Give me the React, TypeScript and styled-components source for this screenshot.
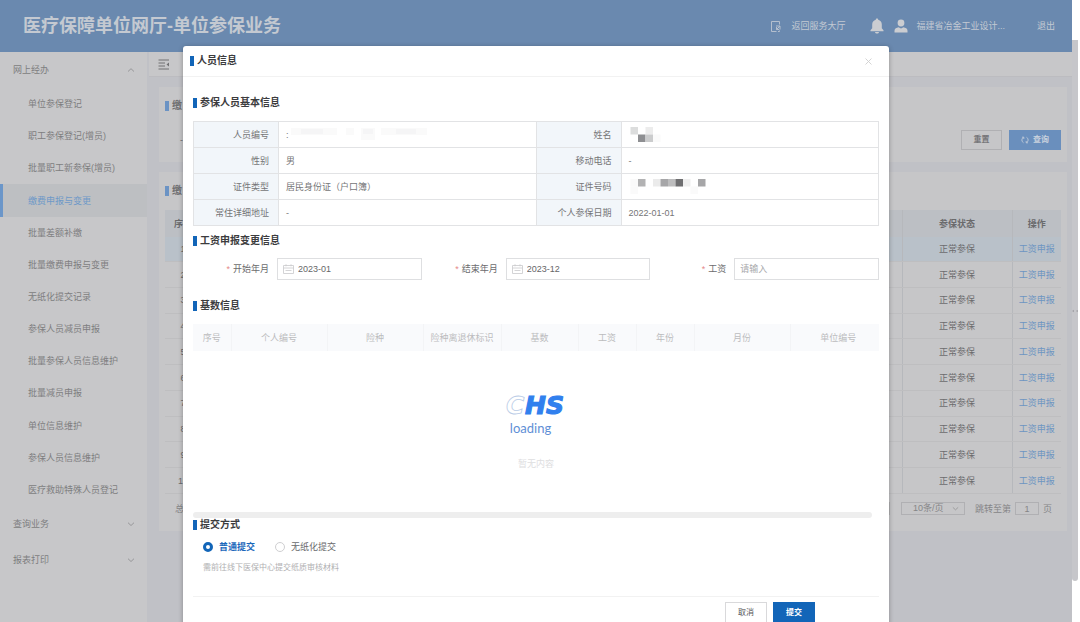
import React, { useState } from "react";
import styled, { createGlobalStyle, css } from "styled-components";

const GlobalStyle = createGlobalStyle`
  *, *::before, *::after { box-sizing: border-box; }
  html, body, #root { height: 100%; }
  body {
    margin: 0;
    overflow: hidden;
    background: #fff;
    color: #6c6c6e;
    font: 9px/12px "Liberation Sans", "Noto Sans CJK SC", sans-serif;
  }
  button, input, select { font: inherit; color: inherit; }
  a { text-decoration: none; }
  ul { margin: 0; padding: 0; list-style: none; }
  h1, h2, p { margin: 0; }
`;

/* ---------- shell ---------- */

const Shell = styled.div`
  display: flex;
  height: 100%;
  overflow: hidden;
`;

const Screen = styled.div`
  position: relative;
  flex: 1;
  min-width: 0;
  display: flex;
  flex-direction: column;
  overflow: hidden;
  background: #c0c1c6;
`;

const ScrollTrack = styled.div`
  flex: none;
  width: 8px;
  padding: 40px 2px 41px 0;
  display: flex;
`;

const ScrollThumb = styled.div`
  flex: 1;
  border-radius: 0 0 3px 3px;
  background: #c6c6ca;
  display: flex;
  align-items: center;
  justify-content: center;
`;

const TopBar = styled.header`
  flex: none;
  height: 52px;
  padding: 0 17px 0 23px;
  display: flex;
  align-items: center;
  background: #6a89af;
  color: #c3c9d3;
`;

const SiteName = styled.h1`
  flex: 1;
  font-size: 18px;
  line-height: 24px;
  font-weight: 700;
  color: #c4c9d1;
`;

const TopLink = styled.a`
  display: flex;
  align-items: center;
  gap: 10px;
  color: inherit;
`;

const TopIcons = styled.div`
  display: flex;
  align-items: center;
  gap: 10px;
  margin: 0 8px 0 25px;
`;

const UserName = styled.span`
  margin-right: 32px;
`;

const Columns = styled.div`
  flex: 1;
  min-height: 0;
  display: flex;
`;

/* ---------- side menu ---------- */

const SideMenu = styled.nav`
  flex: none;
  width: 147px;
  background: #c7c7c9;
  color: #7e7e80;
`;

const GroupButton = styled.button`
  display: flex;
  align-items: center;
  justify-content: space-between;
  width: 100%;
  height: 36px;
  padding: 0 12px 0 13px;
  border: 0;
  background: none;
  text-align: left;
`;

const SubMenu = styled.ul`
  display: grid;
  grid-auto-rows: 1fr;
  height: 418px;
`;

const SubLink = styled.a<{ $active?: boolean }>`
  display: flex;
  align-items: center;
  height: 100%;
  padding-left: 25px;
  border-left: 3px solid transparent;
  color: #7e7e80;
  ${(p) =>
    p.$active &&
    css`
      border-left-color: #6b96c9;
      background: #bdbfc2;
      color: #6d99c8;
    `}
`;

/* ---------- main area ---------- */

const Main = styled.main`
  flex: 1;
  min-width: 0;
  margin-left: 2px;
`;

const TabStrip = styled.div`
  height: 25px;
  padding-left: 9px;
  display: flex;
  align-items: center;
  background: #c7c7c9;
  border-bottom: 1px solid #bcbcc0;
`;

const Card = styled.section<{ $tall?: boolean }>`
  margin: 10px 5px 0 10px;
  padding: 12px 6px;
  min-height: ${(p) => (p.$tall ? 359 : 75)}px;
  background: #c6c6c8;
`;

const Heading = styled.h2<{ $muted?: boolean }>`
  display: flex;
  align-items: center;
  gap: 3px;
  font-size: 10px;
  line-height: 14px;
  font-weight: 700;
  color: ${(p) => (p.$muted ? "#6f6f71" : "#3c3c3e")};

  &::before {
    content: "";
    width: 4px;
    height: 10px;
    background: ${(p) => (p.$muted ? "#6b93c4" : "#1265b8")};
  }
`;

const QueryRow = styled.div`
  display: flex;
  align-items: center;
  gap: 7px;
  margin-top: 17px;
`;

const QueryLabel = styled.span`
  flex: 1;
  padding-left: 15px;
`;

const MutedButton = styled.button<{ $primary?: boolean }>`
  display: flex;
  align-items: center;
  justify-content: center;
  gap: 4px;
  width: ${(p) => (p.$primary ? 52 : 41)}px;
  height: 20px;
  padding: 0;
  border: 1px solid ${(p) => (p.$primary ? "#6a8fbd" : "#b0b0b3")};
  background: ${(p) => (p.$primary ? "#6a8fbd" : "transparent")};
  color: ${(p) => (p.$primary ? "#c9d2de" : "#77777a")};
  font-size: 8px;
  font-weight: 700;
`;

const RecordTable = styled.table`
  width: 100%;
  height: 284px;
  margin-top: 12px;
  border-collapse: collapse;
  table-layout: fixed;
  text-align: center;

  th {
    height: 27px;
    padding: 0;
    background: #bcbfc4;
    color: #6a6a6c;
    font-weight: 700;
  }
  td {
    padding: 0;
    border-bottom: 1px solid #bebec0;
  }
  tbody tr:first-child td {
    background: #b9c1c9;
  }
  th:nth-child(n + 3),
  td:nth-child(n + 3) {
    border-left: 1px solid #b6b8bc;
  }
  a {
    color: #6d95c2;
  }
`;

const Pager = styled.div`
  display: flex;
  align-items: center;
  margin-top: 8px;
  padding: 0 9px 0 10px;
  color: #858587;
`;

const PagerTotal = styled.span`
  flex: 1;
`;

const PagerNext = styled.button`
  width: 14px;
  height: 13px;
  margin-right: 11px;
  padding: 0;
  border: 1px solid #b0b0b3;
  background: none;
`;

const SelectBox = styled.span`
  display: flex;
  align-items: center;
  width: 64px;
  height: 13px;
  margin-right: 10px;
  padding-right: 5px;
  border: 1px solid #b0b0b3;
`;

const PageSize = styled.select`
  flex: 1;
  min-width: 0;
  height: 11px;
  padding: 0 0 0 11px;
  border: 0;
  background: none;
  appearance: none;
  line-height: 11px;
`;

const PageJump = styled.label`
  display: flex;
  align-items: center;
  gap: 4px;
`;

const JumpInput = styled.input`
  width: 24px;
  height: 13px;
  padding: 0;
  border: 1px solid #b0b0b3;
  background: none;
  text-align: center;
`;

/* ---------- dialog ---------- */

const Overlay = styled.div`
  position: absolute;
  inset: 0;
  display: flex;
  justify-content: center;
  align-items: flex-start;
  padding-top: 46px;
  overflow: hidden;
`;

const Dialog = styled.div`
  width: 65%;
  min-width: 706px;
  border-radius: 3px;
  background: #fff;
  box-shadow: 0 1px 5px rgba(0, 0, 0, 0.3);
`;

const DialogHead = styled.div`
  display: flex;
  align-items: center;
  justify-content: space-between;
  height: 31px;
  padding: 0 17px 0 7px;
  border-bottom: 1px solid #f2f2f2;
`;

const CloseButton = styled.button`
  display: flex;
  padding: 0;
  border: 0;
  background: none;
  color: #cfcfcf;
`;

const DialogBody = styled.div`
  padding: 19px 10px 0;
`;

const InfoTable = styled.table`
  width: 100%;
  margin: 11px 0 8px;
  border-collapse: collapse;
  table-layout: fixed;

  tr {
    height: 26px;
  }
  th,
  td {
    height: 26px;
    padding: 0 7px;
    border: 1px solid #e2e3e5;
    color: #757577;
    font-weight: 400;
    text-align: left;
  }
  th {
    padding-right: 9px;
    background: #f2f6fa;
    text-align: right;
  }
  svg {
    display: block;
  }
`;

const FormGrid = styled.div`
  display: grid;
  grid-template-columns: repeat(3, 1fr);
  margin: 10px 0 19px;
`;

const Field = styled.div`
  display: flex;
  align-items: center;
  gap: 8px;
`;

const FieldLabel = styled.label`
  width: 76px;
  text-align: right;
  color: #6c6c6e;

  &::before {
    content: "*";
    margin-right: 3px;
    color: #e58a8a;
  }
`;

const InputBox = styled.span`
  flex: 1;
  min-width: 0;
  display: flex;
  align-items: center;
  gap: 4px;
  height: 22px;
  padding: 0 5px;
  border: 1px solid #dedfe1;
`;

const TextInput = styled.input`
  flex: 1;
  min-width: 0;
  padding: 0;
  border: 0;
  outline: 0;
  background: none;
  color: #666668;

  &::placeholder {
    color: #a9a9ab;
    opacity: 1;
  }
`;

const BaseScroller = styled.div`
  margin-top: 11px;
  overflow: hidden;
`;

const BaseTable = styled.table`
  width: 693px;
  border-collapse: collapse;
  table-layout: fixed;

  th {
    height: 27px;
    padding: 0;
    background: #f9fafc;
    color: #bcbcbe;
    font-weight: 400;
    text-align: center;
  }
  th + th {
    border-left: 1px solid #f3f4f6;
  }
`;

const EmptyState = styled.div`
  display: flex;
  flex-direction: column;
  align-items: center;
  height: 161px;
  padding-top: 38px;
  color: #dededf;
`;

const LoadingText = styled.span`
  margin: 0 11px 23px 0;
  font: 13px/14px "Lato", "Liberation Sans", sans-serif;
  color: #5f8fd6;
`;

const HorizontalBar = styled.div`
  height: 6px;
  margin: 0 7px 0 0;
  border-radius: 3px;
  background: #eeeeee;
`;

const RadioRow = styled.div`
  display: flex;
  gap: 20px;
  margin: 9px 0 9px 10px;
`;

const RadioLabel = styled.label<{ $on: boolean }>`
  display: flex;
  align-items: center;
  gap: 6px;
  color: ${(p) => (p.$on ? "#1b68bb" : "#6a6a6c")};
  font-weight: ${(p) => (p.$on ? 700 : 400)};
`;

const Radio = styled.input`
  appearance: none;
  width: 10px;
  height: 10px;
  margin: 0;
  border: 1px solid #cfcfd1;
  border-radius: 50%;
  background: #fff;

  &:checked {
    border: 3px solid #1265b8;
  }
`;

const Hint = styled.p`
  margin-left: 10px;
  font-size: 8px;
  color: #b0b0b2;
`;

const DialogFoot = styled.div`
  display: flex;
  justify-content: flex-end;
  gap: 6px;
  margin-top: 22px;
  padding: 5px 64px 12px 0;
  border-top: 1px solid #f2f2f2;
`;

const DialogButton = styled.button<{ $primary?: boolean }>`
  width: 42px;
  height: 22px;
  padding: 0;
  border: 1px solid ${(p) => (p.$primary ? "#1265b8" : "#d9d9db")};
  background: ${(p) => (p.$primary ? "#1265b8" : "#fff")};
  color: ${(p) => (p.$primary ? "#fff" : "#555557")};
  font-size: 8px;
  font-weight: ${(p) => (p.$primary ? 700 : 400)};
`;

/* ---------- icons ---------- */

const Chevron = ({ up, size = 8 }: { up?: boolean; size?: number }) => (
  <svg width={size} height={size} viewBox="0 0 8 8" fill="none" stroke="#929294" strokeWidth="0.9">
    <path d={up ? "M1 5.5 4 2.7 7 5.5" : "M1 2.7 4 5.5 7 2.7"} />
  </svg>
);

const BackIcon = () => (
  <svg width="11" height="13" viewBox="0 0 11 13" fill="none" stroke="#b4bfce" strokeWidth="1">
    <path d="M9.5 4.500V1.500H1.500v10H6.500M9.500 10.500v1H8" />
    <path d="M6 6h4v3.500M10 6 6.500 9.500M6.500 7v2.500H9" />
  </svg>
);

const BellIcon = () => (
  <svg width="14" height="16" viewBox="0 0 14 16" fill="#cbcdd1">
    <path d="M7 0.500c.8 0 1.200.5 1.200 1.200C10.500 2.300 11.800 4 11.800 6.500v3.800l1.700 2v1H.5v-1l1.700-2V6.500C2.200 4 3.500 2.300 5.800 1.700 5.800 1 6.200.5 7 .5Z" />
    <path d="M5 14h4c-.2 1-1 1.600-2 1.600S5.200 15 5 14Z" />
  </svg>
);

const UserIcon = () => (
  <svg width="14" height="14" viewBox="0 0 14 14" fill="#cbcdd1">
    <circle cx="7" cy="4" r="3.400" />
    <path d="M.5 13.500v-1.800C.5 9.500 2.500 8.600 4.500 8.200L7 9.400l2.500-1.200c2 .4 4 1.300 4 3.500v1.800Z" />
  </svg>
);

const FoldIcon = () => (
  <svg width="12" height="11" viewBox="0 0 12 11" fill="none" stroke="#707072" strokeWidth="1">
    <path d="M.5 1h10.500M.5 4h6.500M.5 7h6.500M.5 10h10.500" />
    <path d="M11 3.500v4L8.500 5.500Z" fill="#707072" stroke="none" />
  </svg>
);

const RefreshIcon = () => (
  <svg width="8" height="8" viewBox="0 0 8 8" fill="none" stroke="#c0cbd9" strokeWidth="0.9">
    <path d="M2.500 6.700A3 3 0 0 1 2.600 1.300M5.500 1.300A3 3 0 0 1 5.400 6.700M1 1.200h1.800V3M7 6.800H5.200V5" />
  </svg>
);

const CalendarIcon = () => (
  <svg width="11" height="10" viewBox="0 0 11 10" fill="none" stroke="#c9c9cb" strokeWidth="0.8">
    <path d="M.5 1.500h10v8H.5zM.5 4h10M3 .3v2M8 .3v2M2.500 6.500h6" />
  </svg>
);

const CloseIcon = () => (
  <svg width="7" height="7" viewBox="0 0 7 7" stroke="currentColor" strokeWidth="0.9">
    <path d="M.5.5l6 6M6.500.5l-6 6" />
  </svg>
);

const SplitterDots = () => (
  <svg width="6" height="4" viewBox="0 0 6 4" fill="#a2a2a6">
    <path d="M0 2 2 .8v2.400zM4.500 1.300H6v1.400H4.500z" />
  </svg>
);

const ChsLogo = () => (
  <svg width="64" height="32" viewBox="0 0 64 32" overflow="visible" role="img" aria-label="CHS">
    <g fontFamily="DejaVu Sans" fontSize="25" fontWeight="700" fontStyle="italic">
      <text x="2" y="25" fill="#fff" stroke="#b9cbe6" strokeWidth="0.8">C</text>
      <text x="21" y="25" fill="#3180ee" stroke="#3180ee" strokeWidth="1.2">HS</text>
    </g>
  </svg>
);

type Block = [col: number, row: number, fill: string];

const Mosaic = ({ blocks }: { blocks: Block[] }) => (
  <svg width="150" height="15" viewBox="0 0 150 15">
    {blocks.map(([col, row, fill]) => (
      <rect key={`${col}-${row}`} x={1.5 + col * 7.5} y={row * 7.5} width="7.5" height="7.5" fill={fill} />
    ))}
  </svg>
);

/* ---------- data ---------- */

const menuItems = [
  "单位参保登记",
  "职工参保登记(增员)",
  "批量职工新参保(增员)",
  "缴费申报与变更",
  "批量差额补缴",
  "批量缴费申报与变更",
  "无纸化提交记录",
  "参保人员减员申报",
  "批量参保人员信息维护",
  "批量减员申报",
  "单位信息维护",
  "参保人员信息维护",
  "医疗救助特殊人员登记",
];

const baseColumns: [string, number][] = [
  ["序号", 38],
  ["个人编号", 96],
  ["险种", 96],
  ["险种离退休标识", 78],
  ["基数", 77],
  ["工资", 58],
  ["年份", 58],
  ["月份", 96],
  ["单位编号", 96],
];

const nameBlocks: Block[] = [
  [0, 0, "#dcdddd"],
  [1, 1, "#8e8f92"],
  [2, 0, "#ececec"],
  [2, 1, "#cbcccd"],
  [3, 1, "#fafafa"],
];

const idBlocks: Block[] = [
  [0, 0, "#fafafa"],
  [0, 1, "#fafafa"],
  [1, 0, "#b2b2b3"],
  [3, 0, "#ebebeb"],
  [4, 0, "#a6a6a8"],
  [5, 0, "#bdbdbe"],
  [6, 0, "#6f6f71"],
  [7, 0, "#efefef"],
  [8, 1, "#fafafa"],
  [9, 0, "#a6a6a8"],
];

const CodeSmudge = () => (
  <svg width="146" height="15" viewBox="0 0 146 15" fill="#f5f5f6">
    <text x="0" y="11" fontSize="9" fill="#757577">:</text>
    <path d="M5 1h46v7H5zM60 1h8v7h-8zM75 1h14v12h-14zM95 1h46v7H95z" fill="#fafafa" />
    <path d="M15 2h22v5H15zM77 2h10v5H77zM110 2h20v5h-20z" />
  </svg>
);

/* ---------- page ---------- */

export default function App() {
  const [mode, setMode] = useState("normal");
  const [start, setStart] = useState("2023-01");
  const [end, setEnd] = useState("2023-12");
  const [wage, setWage] = useState("");

  return (
    <>
      <GlobalStyle />
      <Shell>
        <Screen>
          <TopBar>
            <SiteName>医疗保障单位网厅-单位参保业务</SiteName>
            <TopLink href="#hall">
              <BackIcon />
              返回服务大厅
            </TopLink>
            <TopIcons>
              <BellIcon />
              <UserIcon />
            </TopIcons>
            <UserName>福建省冶金工业设计...</UserName>
            <TopLink href="#logout">退出</TopLink>
          </TopBar>

          <Columns>
            <SideMenu>
              <GroupButton type="button">
                网上经办
                <Chevron up />
              </GroupButton>
              <SubMenu>
                {menuItems.map((item) => (
                  <li key={item}>
                    <SubLink href="#menu" $active={item === "缴费申报与变更"}>
                      {item}
                    </SubLink>
                  </li>
                ))}
              </SubMenu>
              <GroupButton type="button">
                查询业务
                <Chevron />
              </GroupButton>
              <GroupButton type="button">
                报表打印
                <Chevron />
              </GroupButton>
            </SideMenu>

            <Main>
              <TabStrip>
                <FoldIcon />
              </TabStrip>

              <Card>
                <Heading $muted>缴</Heading>
                <QueryRow>
                  <QueryLabel>-</QueryLabel>
                  <MutedButton type="button">重置</MutedButton>
                  <MutedButton type="button" $primary>
                    <RefreshIcon />
                    查询
                  </MutedButton>
                </QueryRow>
              </Card>

              <Card $tall>
                <Heading $muted>缴</Heading>
                <RecordTable>
                  <colgroup>
                    <col style={{ width: 36 }} />
                    <col />
                    <col style={{ width: 110 }} />
                    <col style={{ width: 49 }} />
                  </colgroup>
                  <thead>
                    <tr>
                      <th>序号</th>
                      <th />
                      <th>参保状态</th>
                      <th>操作</th>
                    </tr>
                  </thead>
                  <tbody>
                    {Array.from({ length: 10 }, (_, i) => (
                      <tr key={i}>
                        <td>{i + 1}</td>
                        <td />
                        <td>正常参保</td>
                        <td>
                          <a href="#declare">工资申报</a>
                        </td>
                      </tr>
                    ))}
                  </tbody>
                </RecordTable>
                <Pager>
                  <PagerTotal>总</PagerTotal>
                  <PagerNext type="button" aria-label="下一页" />
                  <SelectBox>
                    <PageSize aria-label="每页条数">
                      <option>10条/页</option>
                    </PageSize>
                    <Chevron size={7} />
                  </SelectBox>
                  <PageJump>
                    跳转至第
                    <JumpInput defaultValue="1" />
                    页
                  </PageJump>
                </Pager>
              </Card>
            </Main>
          </Columns>

          <Overlay>
            <Dialog role="dialog" aria-labelledby="dialog-title">
              <DialogHead>
                <Heading id="dialog-title">人员信息</Heading>
                <CloseButton type="button" aria-label="关闭">
                  <CloseIcon />
                </CloseButton>
              </DialogHead>

              <DialogBody>
                <Heading>参保人员基本信息</Heading>
                <InfoTable>
                  <colgroup>
                    <col style={{ width: 85 }} />
                    <col />
                    <col style={{ width: 85 }} />
                    <col />
                  </colgroup>
                  <tbody>
                    <tr>
                      <th>人员编号</th>
                      <td>
                        <CodeSmudge />
                      </td>
                      <th>姓名</th>
                      <td>
                        <Mosaic blocks={nameBlocks} />
                      </td>
                    </tr>
                    <tr>
                      <th>性别</th>
                      <td>男</td>
                      <th>移动电话</th>
                      <td>-</td>
                    </tr>
                    <tr>
                      <th>证件类型</th>
                      <td>居民身份证（户口簿）</td>
                      <th>证件号码</th>
                      <td>
                        <Mosaic blocks={idBlocks} />
                      </td>
                    </tr>
                    <tr>
                      <th>常住详细地址</th>
                      <td>-</td>
                      <th>个人参保日期</th>
                      <td>2022-01-01</td>
                    </tr>
                  </tbody>
                </InfoTable>

                <Heading>工资申报变更信息</Heading>
                <FormGrid>
                  <Field>
                    <FieldLabel htmlFor="start">开始年月</FieldLabel>
                    <InputBox>
                      <CalendarIcon />
                      <TextInput id="start" value={start} onChange={(e) => setStart(e.target.value)} />
                    </InputBox>
                  </Field>
                  <Field>
                    <FieldLabel htmlFor="end">结束年月</FieldLabel>
                    <InputBox>
                      <CalendarIcon />
                      <TextInput id="end" value={end} onChange={(e) => setEnd(e.target.value)} />
                    </InputBox>
                  </Field>
                  <Field>
                    <FieldLabel htmlFor="wage">工资</FieldLabel>
                    <InputBox>
                      <TextInput
                        id="wage"
                        placeholder="请输入"
                        value={wage}
                        onChange={(e) => setWage(e.target.value)}
                      />
                    </InputBox>
                  </Field>
                </FormGrid>

                <Heading>基数信息</Heading>
                <BaseScroller>
                  <BaseTable>
                    <colgroup>
                      {baseColumns.map(([name, width]) => (
                        <col key={name} style={{ width }} />
                      ))}
                    </colgroup>
                    <thead>
                      <tr>
                        {baseColumns.map(([name]) => (
                          <th key={name}>{name}</th>
                        ))}
                      </tr>
                    </thead>
                  </BaseTable>
                </BaseScroller>
                <EmptyState>
                  <ChsLogo />
                  <LoadingText>loading</LoadingText>
                  暂无内容
                </EmptyState>
                <HorizontalBar />

                <Heading>提交方式</Heading>
                <RadioRow>
                  <RadioLabel $on={mode === "normal"}>
                    <Radio
                      type="radio"
                      name="mode"
                      checked={mode === "normal"}
                      onChange={() => setMode("normal")}
                    />
                    普通提交
                  </RadioLabel>
                  <RadioLabel $on={mode === "paperless"}>
                    <Radio
                      type="radio"
                      name="mode"
                      checked={mode === "paperless"}
                      onChange={() => setMode("paperless")}
                    />
                    无纸化提交
                  </RadioLabel>
                </RadioRow>
                <Hint>需前往线下医保中心提交纸质审核材料</Hint>

                <DialogFoot>
                  <DialogButton type="button">取消</DialogButton>
                  <DialogButton type="button" $primary>
                    提交
                  </DialogButton>
                </DialogFoot>
              </DialogBody>
            </Dialog>
          </Overlay>
        </Screen>
        <ScrollTrack>
          <ScrollThumb>
            <SplitterDots />
          </ScrollThumb>
        </ScrollTrack>
      </Shell>
    </>
  );
}
